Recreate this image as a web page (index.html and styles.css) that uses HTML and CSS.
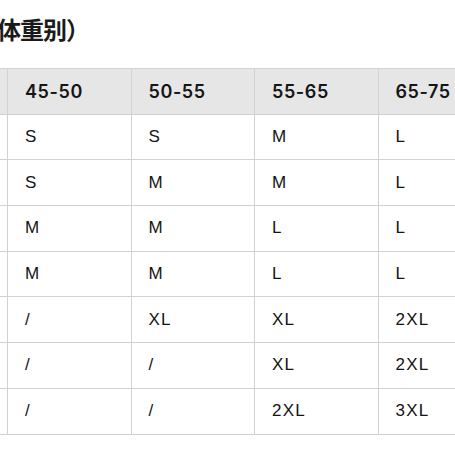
FILE: index.html
```html
<!DOCTYPE html>
<html lang="zh">
<head>
<meta charset="utf-8">
<link rel="stylesheet" href="styles.css">
</head>
<body>
<div class="page">
  <div class="title">体重别）</div>
  <div class="table-wrap">
    <table class="size-table">
      <colgroup>
        <col class="c-lead"><col class="c"><col class="c"><col class="c"><col class="c">
      </colgroup>
      <thead>
        <tr><th></th><th>45-50</th><th>50-55</th><th>55-65</th><th>65-75</th></tr>
      </thead>
      <tbody>
        <tr><td></td><td>S</td><td>S</td><td>M</td><td>L</td></tr>
        <tr><td></td><td>S</td><td>M</td><td>M</td><td>L</td></tr>
        <tr><td></td><td>M</td><td>M</td><td>L</td><td>L</td></tr>
        <tr><td></td><td>M</td><td>M</td><td>L</td><td>L</td></tr>
        <tr><td></td><td>/</td><td>XL</td><td>XL</td><td>2XL</td></tr>
        <tr><td></td><td>/</td><td>/</td><td>XL</td><td>2XL</td></tr>
        <tr><td></td><td>/</td><td>/</td><td>2XL</td><td>3XL</td></tr>
      </tbody>
    </table>
  </div>
</div>
</body>
</html>
```
FILE: styles.css
```css
html, body {
  margin: 0;
  padding: 0;
  background: #ffffff;
}
.page {
  width: 455px;
  height: 455px;
  overflow: hidden;
  font-family: "Liberation Sans", "Noto Sans CJK SC", sans-serif;
  color: #141414;
}
.title {
  box-sizing: border-box;
  height: 68px;
  padding-top: 14px;
  margin-left: -3px;
  font-family: "Noto Sans CJK SC", sans-serif;
  font-size: 24px;
  line-height: 30px;
  letter-spacing: -1px;
  font-weight: 700;
  color: #1a1a1a;
  white-space: nowrap;
}
.table-wrap {
  width: 455px;
  overflow: hidden;
}
.size-table {
  border-collapse: collapse;
  table-layout: fixed;
  margin-left: -93px;
  width: 594px;
}
.c-lead {
  width: 100px;
}
.c {
  width: 123.5px;
}
.size-table th,
.size-table td {
  border: 1px solid #d2d2d2;
  height: 45.7px;
  box-sizing: border-box;
  padding: 0 0 0 17px;
  text-align: left;
  vertical-align: middle;
  white-space: nowrap;
  overflow: hidden;
}
.size-table th {
  background: #e6e6e6;
  font-family: "Inter", "Liberation Sans", sans-serif;
  font-size: 18px;
  font-weight: 600;
  letter-spacing: 0.6px;
  color: #151515;
}
.size-table td {
  font-size: 17px;
  font-weight: 400;
  letter-spacing: 1.2px;
}
```
